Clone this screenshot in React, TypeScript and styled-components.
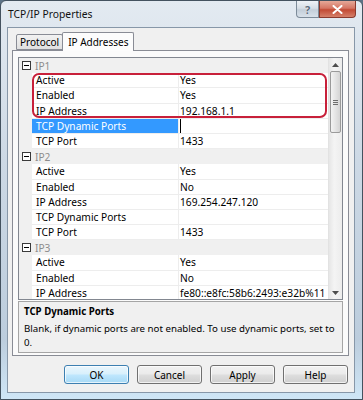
import styled, { createGlobalStyle } from 'styled-components';

const GlobalStyle = createGlobalStyle`
  html, body {
    margin: 0;
    padding: 0;
    background: #5d7387;
  }
  body {
    font-family: "Noto Sans", "Liberation Sans", sans-serif;
    font-size: 10.2px;
    color: #000000;
  }
`;

const Window = styled.div`
  width: 363px;
  height: 400px;
  box-sizing: border-box;
  border: 1px solid #44525f;
  border-radius: 6px 6px 0 0;
  background: linear-gradient(to bottom, #e3eaf1 0%, #cdd9e5 40%, #bccddd 85%, #cfe6f6 100%);
  display: flex;
  flex-direction: column;
  overflow: hidden;
`;

const TitleBar = styled.div`
  height: 26px;
  display: flex;
  align-items: flex-start;
  justify-content: space-between;
  padding: 0 6px 0 7px;
`;

const Title = styled.div`
  font-size: 10.3px;
  line-height: 26px;
  color: #111111;
`;

const CaptionButtons = styled.div`
  display: flex;
`;

const CaptionButton = styled.div<{ $close?: boolean }>`
  width: ${({ $close }) => ($close ? '37px' : '23px')};
  height: 17px;
  box-sizing: border-box;
  border: 1px solid ${({ $close }) => ($close ? '#8a3a2e' : '#7c8b99')};
  border-top: none;
  border-radius: ${({ $close }) => ($close ? '0 0 4px 0' : '0 0 0 4px')};
  background: ${({ $close }) =>
    $close
      ? 'linear-gradient(to bottom, #e6a898 0%, #d57664 45%, #c24a34 55%, #d5806a 100%)'
      : 'linear-gradient(to bottom, #eef2f6 0%, #d6dee6 45%, #c3ced9 55%, #d8e1ea 100%)'};
  display: flex;
  align-items: center;
  justify-content: center;
`;

const HelpGlyph = styled.span`
  color: #5a6b7b;
  font-size: 11px;
  font-weight: bold;
  text-shadow: 0 0 1px #ffffff;
`;

const Client = styled.div`
  flex: 1;
  margin: 0 7px 6px 6px;
  background: #f0f0f0;
  border: 1px solid #8797a8;
  display: flex;
  flex-direction: column;
  padding: 3px 5px 0 4px;
`;

const TabStrip = styled.div`
  display: flex;
  align-items: flex-end;
  height: 19px;
  padding-left: 4px;
`;

const Tab = styled.div<{ $active?: boolean }>`
  height: ${({ $active }) => ($active ? '19px' : '16px')};
  box-sizing: border-box;
  padding: 0 ${({ $active }) => ($active ? '5px' : '3px')};
  margin-bottom: ${({ $active }) => ($active ? '-1px' : '0')};
  border: 1px solid #898c95;
  border-bottom: ${({ $active }) => ($active ? 'none' : '1px solid #898c95')};
  border-radius: 2px 2px 0 0;
  background: ${({ $active }) => ($active ? '#fcfcfc' : 'linear-gradient(to bottom, #f2f2f2, #e0e0e0)')};
  margin-left: ${({ $active }) => ($active ? '-1px' : '0')};
  display: flex;
  align-items: center;
  font-size: 10px;
  position: relative;
  z-index: ${({ $active }) => ($active ? 1 : 0)};
`;

const TabPanel = styled.div`
  height: 306px;
  box-sizing: border-box;
  border: 1px solid #898c95;
  background: #fbfbfb;
  padding: 6px 5px 0 5px;
  display: flex;
  flex-direction: column;
  gap: 1px;
`;

const Grid = styled.div`
  height: 243px;
  box-sizing: border-box;
  border: 1px solid #828790;
  background: #ffffff;
  display: flex;
  overflow: hidden;
`;

const Rows = styled.div`
  flex: 1;
  position: relative;
  overflow: hidden;
`;

const Row = styled.div`
  display: grid;
  grid-template-columns: 13px 147px 1fr;
  height: 15.2px;
  line-height: 14.8px;
`;

const Gutter = styled.div`
  background: #f0f0f0;
`;

const CategoryRow = styled.div`
  display: flex;
  align-items: center;
  height: 15.2px;
  background: #f0f0f0;
  box-sizing: border-box;
  padding-left: 3px;
  gap: 4px;
`;

const CategoryName = styled.span`
  color: #8c8c8c;
`;

const NameCell = styled.div<{ $selected?: boolean }>`
  box-sizing: border-box;
  padding-left: 4px;
  border-bottom: 1px solid #ededed;
  border-right: 1px solid #ededed;
  background: ${({ $selected }) => ($selected ? '#3399ff' : '#ffffff')};
  color: ${({ $selected }) => ($selected ? '#ffffff' : '#000000')};
  white-space: nowrap;
  overflow: hidden;
`;

const ValueCell = styled.div`
  box-sizing: border-box;
  padding-left: 1px;
  border-bottom: 1px solid #ededed;
  white-space: nowrap;
  overflow: hidden;
`;

const Caret = styled.span`
  display: inline-block;
  width: 1px;
  height: 14px;
  background: #000000;
  vertical-align: top;
`;

const Callout = styled.div`
  position: absolute;
  left: 13px;
  top: 15px;
  width: 295px;
  height: 45px;
  box-sizing: border-box;
  border: 2px solid #c8203a;
  border-radius: 7px;
  pointer-events: none;
`;

const ScrollBar = styled.div`
  width: 13px;
  background: linear-gradient(to right, #e6e6e6, #f4f4f4 40%, #ececec);
  border-left: 1px solid #e2e2e2;
  display: flex;
  flex-direction: column;
  align-items: center;
`;

const ArrowBox = styled.div`
  height: 13px;
  width: 100%;
  display: flex;
  align-items: center;
  justify-content: center;
`;

const Thumb = styled.div`
  width: 11px;
  height: 62px;
  box-sizing: border-box;
  border: 1px solid #9a9a9a;
  border-radius: 2px;
  background: linear-gradient(to right, #f3f3f3, #e4e4e4 50%, #d4d4d4);
  display: flex;
  flex-direction: column;
  align-items: center;
  justify-content: center;
  gap: 1px;
`;

const Grip = styled.span`
  width: 5px;
  height: 1px;
  background: #6d6d6d;
`;

const Track = styled.div`
  flex: 1;
`;

const Description = styled.div`
  height: 52px;
  box-sizing: border-box;
  border: 1px solid #a5a5a5;
  background: #f0f0f0;
  padding: 3px 2px 0 5px;
  font-size: 9.7px;
  line-height: 14.5px;
`;

const DescTitle = styled.div`
  font-weight: bold;
  margin-bottom: 2px;
`;

const ButtonRow = styled.div`
  display: flex;
  justify-content: flex-end;
  gap: 8px;
  padding: 9px 1px 0 0;
`;

const Button = styled.button<{ $default?: boolean }>`
  width: 65px;
  height: 19px;
  box-sizing: border-box;
  font-family: inherit;
  font-size: 10px;
  color: #000000;
  padding: 0;
  border: 1px solid ${({ $default }) => ($default ? '#3c7fb1' : '#707070')};
  border-radius: 3px;
  background: ${({ $default }) =>
    $default
      ? 'linear-gradient(to bottom, #eaf6fd 0%, #d9f0fc 45%, #bee6fd 55%, #a7d9f5 100%)'
      : 'linear-gradient(to bottom, #f2f2f2 0%, #ebebeb 45%, #dddddd 55%, #cfcfcf 100%)'};
  box-shadow: inset 0 0 0 1px rgba(255, 255, 255, 0.7);
`;

type Prop = { name: string; value: string; selected?: boolean };
type Category = { name: string; props: Prop[] };

const categories: Category[] = [
  {
    name: 'IP1',
    props: [
      { name: 'Active', value: 'Yes' },
      { name: 'Enabled', value: 'Yes' },
      { name: 'IP Address', value: '192.168.1.1' },
      { name: 'TCP Dynamic Ports', value: '', selected: true },
      { name: 'TCP Port', value: '1433' },
    ],
  },
  {
    name: 'IP2',
    props: [
      { name: 'Active', value: 'Yes' },
      { name: 'Enabled', value: 'No' },
      { name: 'IP Address', value: '169.254.247.120' },
      { name: 'TCP Dynamic Ports', value: '' },
      { name: 'TCP Port', value: '1433' },
    ],
  },
  {
    name: 'IP3',
    props: [
      { name: 'Active', value: 'Yes' },
      { name: 'Enabled', value: 'No' },
      { name: 'IP Address', value: 'fe80::e8fc:58b6:2493:e32b%11' },
    ],
  },
];

const MinusBox = () => (
  <svg width="9" height="9" viewBox="0 0 9 9">
    <rect x="0.5" y="0.5" width="8" height="8" fill="#ffffff" stroke="#3a3a3a" />
    <line x1="2" y1="4.5" x2="7" y2="4.5" stroke="#000000" />
  </svg>
);

const Arrow = ({ down }: { down?: boolean }) => (
  <svg width="7" height="4" viewBox="0 0 7 4">
    <path d={down ? 'M0 0 L7 0 L3.5 4 Z' : 'M0 4 L7 4 L3.5 0 Z'} fill="#4d4d4d" />
  </svg>
);

const App = () => {
  return (
    <>
      <GlobalStyle />
      <Window>
        <TitleBar>
          <Title>TCP/IP Properties</Title>
          <CaptionButtons>
            <CaptionButton>
              <HelpGlyph>?</HelpGlyph>
            </CaptionButton>
            <CaptionButton $close>
              <svg width="11" height="9" viewBox="0 0 11 9">
                <path d="M1.5 1 L9.5 8 M9.5 1 L1.5 8" stroke="#ffffff" strokeWidth="2" strokeLinecap="round" />
              </svg>
            </CaptionButton>
          </CaptionButtons>
        </TitleBar>

        <Client>
          <TabStrip>
            <Tab>Protocol</Tab>
            <Tab $active>IP Addresses</Tab>
          </TabStrip>
          <TabPanel>
            <Grid>
              <Rows>
                {categories.map((cat) => (
                  <div key={cat.name}>
                    <CategoryRow>
                      <MinusBox />
                      <CategoryName>{cat.name}</CategoryName>
                    </CategoryRow>
                    {cat.props.map((p) => (
                      <Row key={p.name}>
                        <Gutter />
                        <NameCell $selected={p.selected}>{p.name}</NameCell>
                        <ValueCell>{p.selected ? <Caret /> : p.value}</ValueCell>
                      </Row>
                    ))}
                  </div>
                ))}
                <Callout />
              </Rows>
              <ScrollBar>
                <ArrowBox>
                  <Arrow />
                </ArrowBox>
                <Thumb>
                  <Grip />
                  <Grip />
                  <Grip />
                </Thumb>
                <Track />
                <ArrowBox>
                  <Arrow down />
                </ArrowBox>
              </ScrollBar>
            </Grid>
            <Description>
              <DescTitle>TCP Dynamic Ports</DescTitle>
              <div>Blank, if dynamic ports are not enabled. To use dynamic ports, set to 0.</div>
            </Description>
          </TabPanel>
          <ButtonRow>
            <Button $default>OK</Button>
            <Button>Cancel</Button>
            <Button>Apply</Button>
            <Button>Help</Button>
          </ButtonRow>
        </Client>
      </Window>
    </>
  );
};

export default App;
